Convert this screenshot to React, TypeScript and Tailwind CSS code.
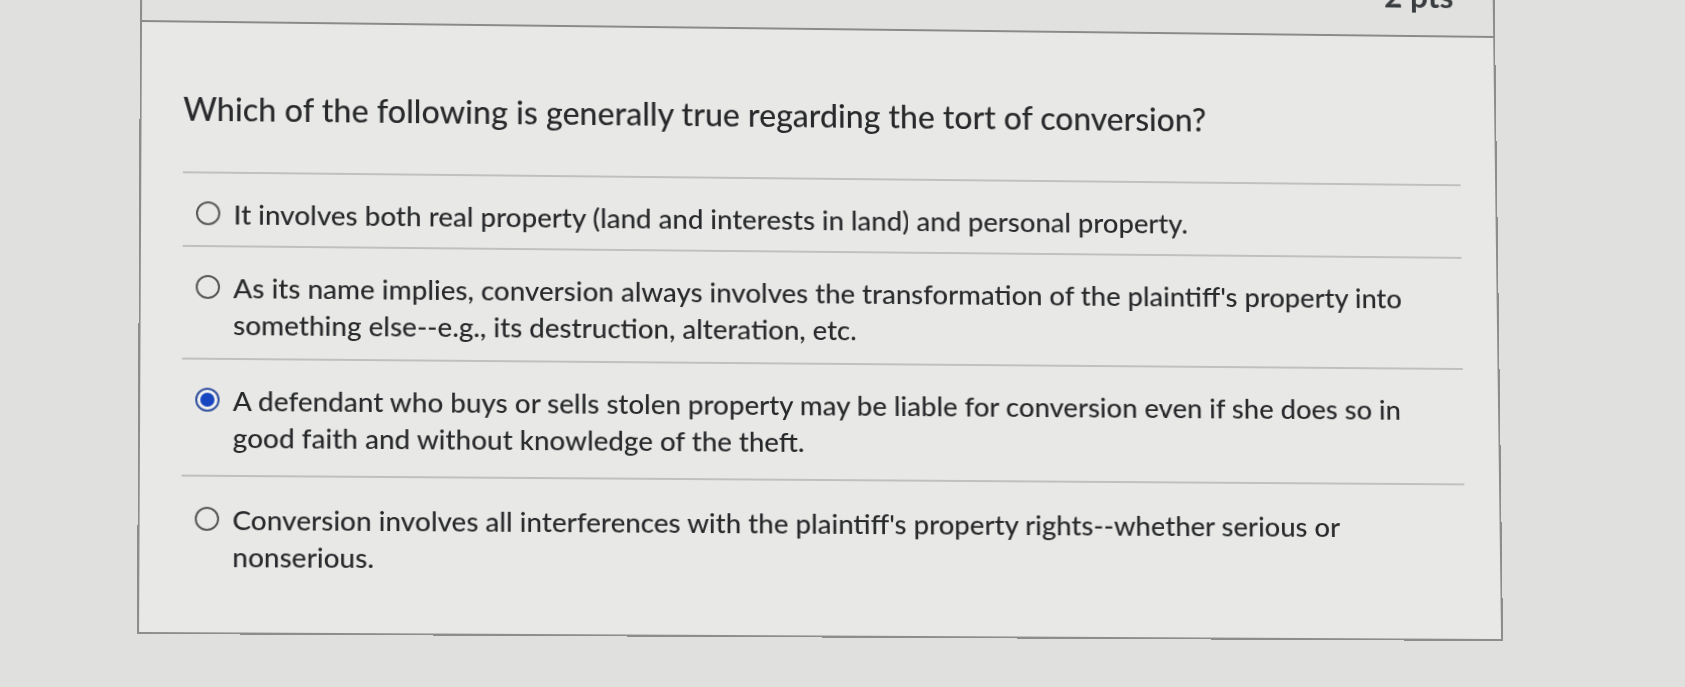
import { useMemo } from 'react'

const options = [
  {
    text: "It involves both real property (land and interests in land) and personal property.",
    selected: false,
    pad: 'pt-[22px] pb-[13px]',
  },
  {
    text: "As its name implies, conversion always involves the transformation of the plaintiff's property into something else--e.g., its destruction, alteration, etc.",
    selected: false,
    pad: 'pt-[22px] pb-[15px]',
  },
  {
    text: "A defendant who buys or sells stolen property may be liable for conversion even if she does so in good faith and without knowledge of the theft.",
    selected: true,
    pad: 'pt-[22px] pb-[19px]',
  },
  {
    text: "Conversion involves all interferences with the plaintiff's property rights--whether serious or nonserious.",
    selected: false,
    pad: 'pt-[24px] pb-[18px]',
  },
]

// the screenshot is a photo of a monitor: map the flat card onto the photographed quad
const CARD_W = 1356
const LINE_TOP = 50 // local y of the header rule
const LINE_BOTTOM = 663 // local y of the card's bottom edge
const QUAD: [number, number][] = [
  [140, 21],
  [1495, 37],
  [1503, 640],
  [137, 633],
]

function quadMatrix(W: number, top: number, bottom: number, q: [number, number][]) {
  const [[x0, y0], [x1, y1], [x2, y2], [x3, y3]] = q
  const dx1 = x1 - x2, dx2 = x3 - x2, dx3 = x0 - x1 + x2 - x3
  const dy1 = y1 - y2, dy2 = y3 - y2, dy3 = y0 - y1 + y2 - y3
  const den = dx1 * dy2 - dx2 * dy1
  const g = (dx3 * dy2 - dx2 * dy3) / den
  const h = (dx1 * dy3 - dx3 * dy1) / den
  const a = x1 - x0 + g * x1, b = x3 - x0 + h * x3, c = x0
  const d = y1 - y0 + g * y1, e = y3 - y0 + h * y3, f = y0
  const D = bottom - top
  const m = [a / W, b / D, c - (b * top) / D, d / W, e / D, f - (e * top) / D, g / W, h / D, 1 - (h * top) / D]
  return `matrix3d(${m[0]},${m[3]},0,${m[6]},${m[1]},${m[4]},0,${m[7]},0,0,1,0,${m[2]},${m[5]},0,${m[8]})`
}

function Radio({ selected }: { selected: boolean }) {
  if (selected) {
    return (
      <span className="mt-[6px] flex h-[24px] w-[24px] flex-shrink-0 items-center justify-center rounded-full border-[2.5px] border-[#35539f] bg-[#f2f2f2]">
        <span className="h-[14px] w-[14px] rounded-full bg-[#1845c0]" />
      </span>
    )
  }
  return <span className="mt-[6px] h-[24px] w-[24px] flex-shrink-0 rounded-full border-[2px] border-[#5c5c5c]" />
}

export default function App() {
  const transform = useMemo(() => quadMatrix(CARD_W, LINE_TOP, LINE_BOTTOM, QUAD), [])

  return (
    <div
      className="h-[687px] w-[1685px] overflow-hidden bg-[#e0e0de] text-[#28292b]"
      style={{ fontFamily: 'Lato, "Noto Sans", sans-serif' }}
    >
      <div
        className="h-[664px] w-[1356px] origin-top-left border-2 border-[#8d8d8b] bg-[#e8e8e6]"
        style={{ transform }}
      >
        {/* Header with points */}
        <div className="flex h-[49px] items-end justify-end border-b-[2px] border-[#8a8a88] bg-[#e1e1df] pb-[24px] pr-[40px]">
          <span className="text-[32px] font-bold leading-none text-[#3a3d40]">2 pts</span>
        </div>

        <div className="pl-[41px] pr-[35px] pt-[68px]">
          <p className="text-[32px] font-medium leading-[38px]">
            Which of the following is generally true regarding the tort of conversion?
          </p>

          <div className="mt-[44px]">
            {options.map((o, i) => (
              <div key={i} className={`border-t-2 border-[#c0c0be] ${o.pad}`}>
                <div className="flex gap-[13px] pl-[13px]">
                  <Radio selected={o.selected} />
                  <span className="pr-[40px] text-[27.5px] font-medium leading-[37px]">{o.text}</span>
                </div>
              </div>
            ))}
          </div>
        </div>
      </div>
    </div>
  )
}
